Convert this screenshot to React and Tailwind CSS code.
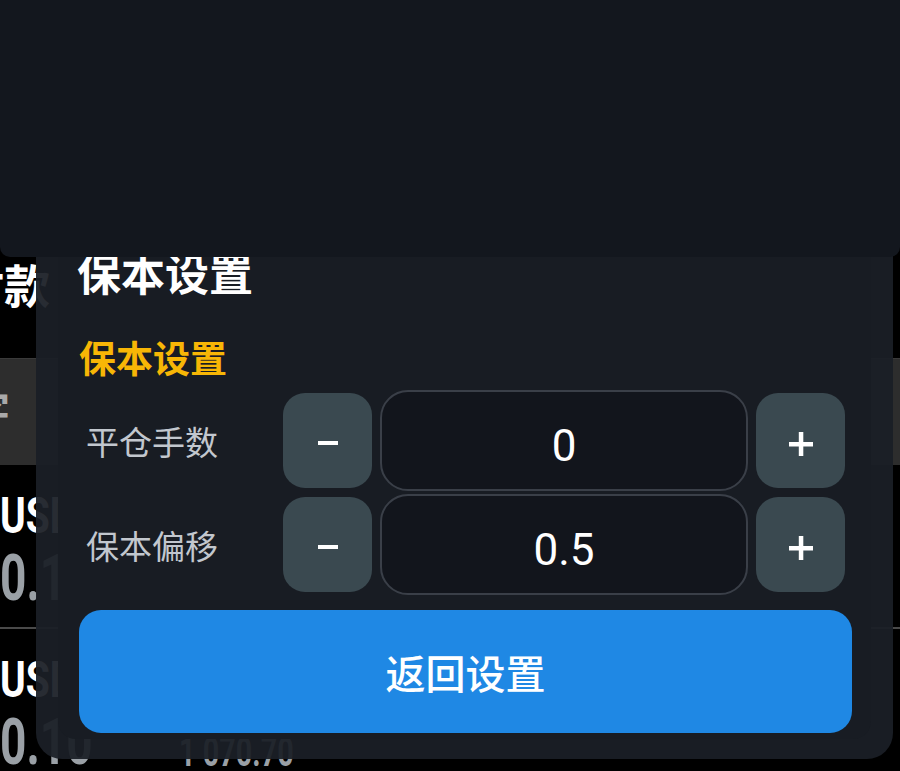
const FONT = { fontFamily: 'Roboto, "Noto Sans CJK SC", sans-serif' };

function MinusIcon() {
  return (
    <svg width="22" height="22" viewBox="0 0 22 22" className="mt-[5px]">
      <rect x="1" y="9" width="20" height="4" fill="#ffffff" />
    </svg>
  );
}

function PlusIcon() {
  return (
    <svg width="24" height="24" viewBox="0 0 24 24" className="mt-[7px]">
      <rect x="0" y="10" width="24" height="4.5" fill="#ffffff" />
      <rect x="9.8" y="0" width="4.5" height="24" fill="#ffffff" />
    </svg>
  );
}

function Stepper({ label, value }) {
  return (
    <div className="flex h-[101px] items-center px-[7px]">
      <div className="w-[197px] pt-[5px] text-[33px] leading-none text-[#c2c7ce]">{label}</div>
      <button className="flex h-[95px] w-[89px] items-center justify-center rounded-[22px] bg-[#3a4950]">
        <MinusIcon />
      </button>
      <div className="mx-[8px] flex h-[101px] flex-1 items-center justify-center rounded-[28px] border-2 border-[#3a3f48] bg-[#12151c] pt-[11px] text-[44px] leading-none text-white">
        {value}
      </div>
      <button className="flex h-[95px] w-[89px] items-center justify-center rounded-[22px] bg-[#3a4950]">
        <PlusIcon />
      </button>
    </div>
  );
}

function BackgroundRow({ top, sub, right }) {
  return (
    <div className="flex h-[162px] flex-col pt-[26px]">
      <div className="h-[54px] origin-left scale-x-[0.78] text-[50px] font-bold leading-[50px] text-white">{top}</div>
      <div className="flex h-[66px] origin-left scale-x-[0.72] items-end gap-[120px] text-[64px] font-bold leading-[64px] text-[#9aa0a6]">
        <span>{sub}</span>
        <span className="text-[40px] leading-[44px]">{right}</span>
      </div>
    </div>
  );
}

export default function App() {
  return (
    <div className="relative h-[771px] w-[900px] overflow-hidden bg-black" style={FONT}>
      {/* table behind the sheet */}
      <div className="flex flex-col pt-[258px]">
        <div className="flex h-[100px] items-start justify-between pt-[2px]">
          <div className="-ml-[42px] text-[46px] font-bold leading-[54px] text-white">付款</div>
          <div className="-mr-[30px] text-[36px] font-bold leading-[48px] text-white">1</div>
        </div>
        <div className="flex h-[107px] items-center border-t border-[#3a3a3a] bg-[#2d2d2d]">
          <div className="-ml-[30px] text-[40px] font-bold text-[#a9a9a9]">字</div>
        </div>
        <BackgroundRow top="USDT" sub="0.10" right="" />
        <div className="h-[2px] bg-[#4a4a4a]" />
        <BackgroundRow top="USDT" sub="0.10" right="1 070.70" />
      </div>

      {/* top panel */}
      <div className="absolute inset-x-0 top-0 z-20 h-[257px] rounded-b-[10px] bg-[#13171e]" />

      {/* sheet */}
      <div className="absolute left-[36px] top-[240px] z-10 w-[857px] rounded-b-[26px] bg-[#1b1f26]/[0.94] px-[22px] pb-[20px]">
        <div className="flex flex-col rounded-b-[18px] bg-[#181c23] pb-[6px] pl-[21px] pr-[19px] pt-[14px]">
          <div className="-ml-[2px] text-[44px] font-bold leading-none text-white">保本设置</div>
          <div className="mt-[44px] text-[37px] font-bold leading-none text-[#f7b606]">保本设置</div>
          <div className="mt-[11px] flex flex-col gap-[3px]">
            <Stepper label="平仓手数" value="0" />
            <Stepper label="保本偏移" value="0.5" />
          </div>
          <button className="mt-[15px] flex h-[123px] items-center justify-center rounded-[22px] bg-[#1f88e4] pt-[8px] text-[40px] font-medium leading-none text-white">
            返回设置
          </button>
        </div>
      </div>
    </div>
  );
}
